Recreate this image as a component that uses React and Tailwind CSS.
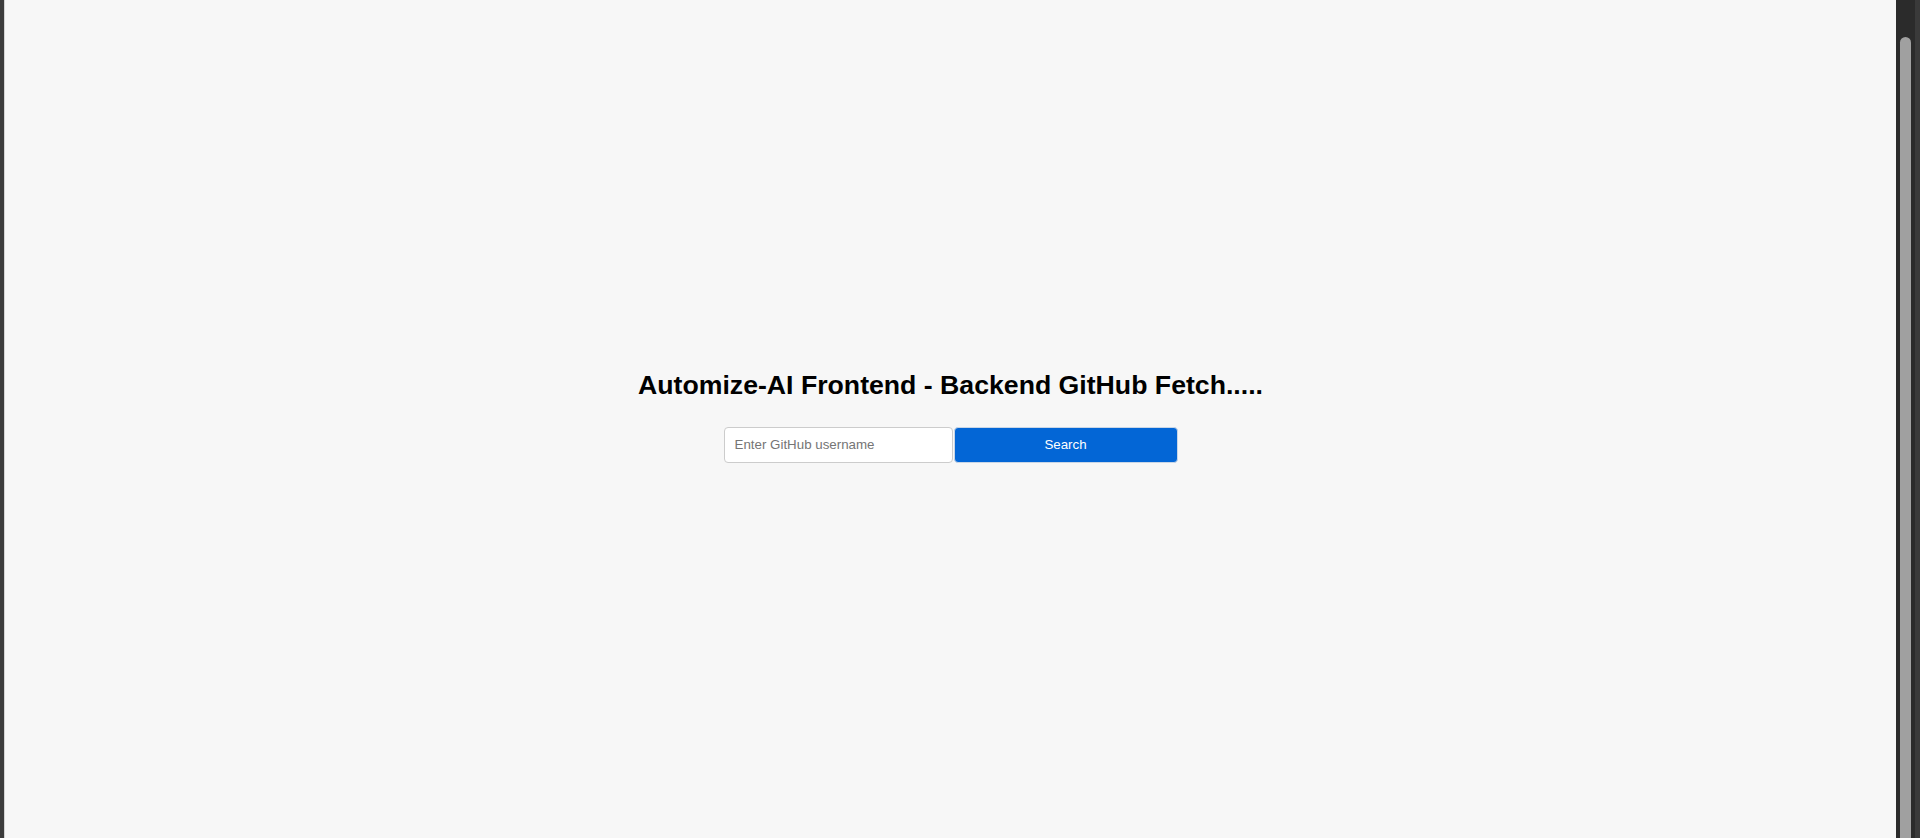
import React, { useState } from 'react';

const ScrollBar = () => (
  <div className="flex h-full shrink-0">
    <div className="flex h-full w-[19px] flex-col bg-[#2b2b2b] pl-[4px] pr-[4px] pt-[37px]">
      <div className="w-[11px] flex-1 rounded-t-full bg-[#a0a0a0]" />
    </div>
    <div className="h-full w-[5px] bg-[#3a3a3a]" />
  </div>
);

export default function App() {
  const [username, setUsername] = useState('');

  const handleSubmit = (e) => {
    e.preventDefault();
  };

  return (
    <div className="flex h-[838px] w-full overflow-hidden bg-[#f7f7f7] font-['Liberation_Sans',Arial,sans-serif]">
      <div className="flex h-full shrink-0">
        <div className="h-full w-[4px] bg-[#3c3c3c]" />
        <div className="h-full w-[1px] bg-[#d4d4d4]" />
      </div>

      <main className="flex flex-1 flex-col items-center justify-center pb-[6px]">
        <h1 className="text-[26.67px] font-bold leading-[31px] text-black">
          Automize-AI Frontend - Backend GitHub Fetch.....
        </h1>

        <form onSubmit={handleSubmit} className="mt-[26px] flex gap-[1px]">
          <input
            className="h-[36px] w-[229px] rounded-[4px] border border-[#cccccc] bg-white px-[10px] text-[13.33px] text-black outline-none placeholder:text-[#757575]"
            placeholder="Enter GitHub username"
            value={username}
            onChange={(e) => setUsername(e.target.value)}
          />
          <button
            type="submit"
            className="h-[36px] w-[224px] rounded-[4px] border border-[#c9d6e6] bg-[#0366d6] text-[13.33px] text-white"
          >
            Search
          </button>
        </form>
      </main>

      <ScrollBar />
    </div>
  );
}
